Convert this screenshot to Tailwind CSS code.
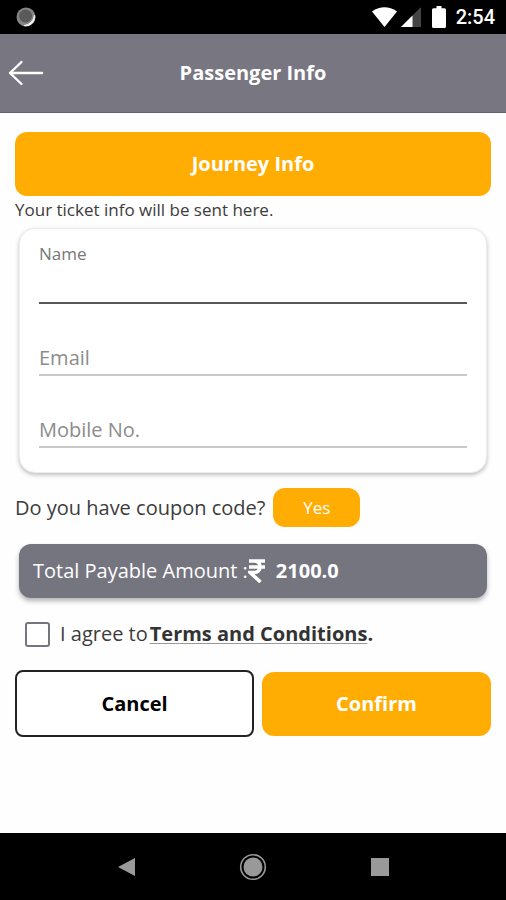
<!DOCTYPE html>
<html lang="en">
<head>
<meta charset="utf-8">
<meta name="viewport" content="width=device-width, initial-scale=1">
<title>Passenger Info</title>
<script src="https://cdn.jsdelivr.net/npm/@tailwindcss/browser@4"></script>
</head>
<body class="flex min-h-screen flex-col bg-[#fefefe] font-['Open_Sans',sans-serif] text-[#3c3c3c]">
  <div class="flex h-[34px] items-center bg-black pr-[11px] pl-4 text-white">
    <svg class="size-5" viewBox="0 0 20 20" aria-hidden="true">
      <circle cx="10" cy="10" r="9.500" fill="#858585"/>
      <path d="M18.600 8A9 9 0 0 1 8 18.600A12 12 0 0 0 18.600 8Z" fill="#f4f4f4" stroke="#f4f4f4"/>
      <circle cx="9.500" cy="9" r="6.500" fill="#5a5a5a"/>
    </svg>
    <svg class="ml-auto h-5 w-[25px]" viewBox="0 0 25 20" aria-hidden="true"><path d="M0 4.500Q12.500-3.800 25 4.500L12.500 20Z" fill="#fff"/></svg>
    <svg class="ml-[4px] size-5" viewBox="0 0 20 20" aria-hidden="true"><path d="M20 0V20H0Z" fill="#444"/><path d="M11.500 8.500V20H0Z" fill="#fff"/></svg>
    <svg class="ml-[11px] h-[22px] w-[14px]" viewBox="0 0 14 22" aria-hidden="true"><path d="M4.500 0h5v2.200H12.500Q14 2.200 14 3.700V20.500Q14 22 12.500 22H1.500Q0 22 0 20.500V3.700Q0 2.200 1.500 2.200H4.500Z" fill="#fff"/></svg>
    <span class="ml-[10px] font-[Roboto] text-[20px] leading-6 font-medium">2:54</span>
  </div>

  <header class="grid h-[79px] grid-cols-[1fr_auto_1fr] items-center border-b border-[#62616b] bg-[#777681] px-2 text-white">
    <button type="button" aria-label="Back" class="w-9">
      <svg class="h-7 w-9" viewBox="0 0 36 28" fill="none" stroke="#fff" stroke-width="2.400" stroke-linecap="round" stroke-linejoin="round" aria-hidden="true"><path d="M34 14H2M13.500 3L2 14L13.500 25"/></svg>
    </button>
    <h1 class="text-[20px] leading-7 font-bold">Passenger Info</h1>
  </header>

  <main class="flex-1 px-[15px] pt-[19px]">
    <button type="button" class="h-16 w-full rounded-xl bg-[#ffad03] text-[20px] font-bold text-white">Journey Info</button>
    <p class="text-[17px] leading-7">Your ticket info will be sent here.</p>

    <form>
      <div class="mx-1 mt-1 rounded-2xl border border-[#ececec] bg-white px-[19px] pt-[15px] pb-6 shadow-[0_2px_4px_rgba(0,0,0,0.25)]">
        <label for="name" class="block text-[17px] leading-5 text-[#777]">Name</label>
        <input id="name" type="text" class="block h-10 w-full border-b-2 border-[#58575c] text-[20px] outline-none">
        <input id="email" type="email" aria-label="Email" placeholder="Email" class="mt-8 block h-10 w-full border-b-2 border-[#c8c8c8] pt-1 text-[20px] outline-none placeholder:text-[#8c8c8c]">
        <input id="mobile" type="tel" aria-label="Mobile No." placeholder="Mobile No." class="mt-8 block h-10 w-full border-b-2 border-[#c8c8c8] pt-1 text-[20px] outline-none placeholder:text-[#8c8c8c]">
      </div>

      <div class="mt-[15px] flex items-center justify-start gap-2">
        <span class="text-[20px] leading-7">Do you have coupon code?</span>
        <button type="button" class="h-[39px] w-[87px] rounded-xl bg-[#ffad03] text-[17px] text-white">Yes</button>
      </div>

      <div class="mx-1 mt-[17px] flex h-[54px] items-center rounded-xl bg-[#757580] px-[14px] text-[20px] text-white shadow-[0_3px_5px_rgba(0,0,0,0.3)]">
        <span>Total Payable Amount :</span>
        <svg class="h-6 w-[18px]" viewBox="0 0 18 24" fill="none" stroke="#fff" stroke-width="3.600" role="img" aria-label="Rupees"><path d="M1 2H17M1 8H17M1 2H6C14 2 14 13.500 6 13.500H2L12.500 23"/></svg>
        <strong class="ml-[10px]">2100.0</strong>
      </div>

      <div class="mt-[22px] flex items-center pl-[10px] text-[20px] leading-7">
        <input id="agree" type="checkbox" class="mr-[10px] size-[25px] appearance-none rounded-[3px] border-2 border-[#757580] bg-white checked:bg-[#757580]">
        <label for="agree">I agree to</label>
        <strong class="ml-[2px] text-[#333]"><a href="#terms" class="underline decoration-[#999] decoration-1 underline-offset-2">Terms and Conditions</a>.</strong>
      </div>

      <div class="mt-[22px] grid grid-cols-[239fr_229fr] items-center gap-2 text-[20px] font-bold">
        <button type="button" class="h-[67px] rounded-lg border-2 border-[#222] bg-white text-black">Cancel</button>
        <button type="submit" class="h-16 rounded-xl bg-[#ffad03] text-white">Confirm</button>
      </div>
    </form>
  </main>

  <nav class="grid h-[67px] grid-cols-[1fr_1fr_1fr] items-center bg-black px-[63px]" aria-label="System">
    <button type="button" aria-label="Back" class="flex justify-center"><svg class="size-5" viewBox="0 0 20 20" aria-hidden="true"><path d="M2 10L19 1V19Z" fill="#999"/></svg></button>
    <button type="button" aria-label="Home" class="flex justify-center"><svg class="size-7" viewBox="0 0 28 28" aria-hidden="true"><circle cx="14" cy="14" r="12.300" fill="none" stroke="#999" stroke-width="1.600"/><circle cx="14" cy="14" r="9.500" fill="#999"/></svg></button>
    <button type="button" aria-label="Recent apps" class="flex justify-center"><svg class="size-[18px]" viewBox="0 0 18 18" aria-hidden="true"><rect width="18" height="18" fill="#999"/></svg></button>
  </nav>
</body>
</html>
